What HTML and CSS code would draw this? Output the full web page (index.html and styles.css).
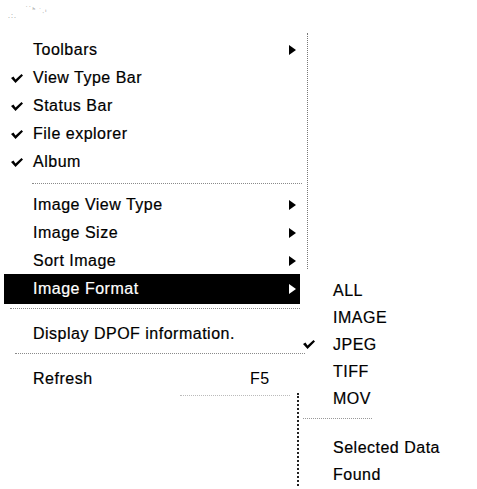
FILE: index.html
```html
<!DOCTYPE html>
<html lang="en">
<head>
    <meta charset="UTF-8" />
    <title>View Menu</title>
    <link rel="stylesheet" href="styles.css">
</head>
<body>

<div class="scan-mark">.:. <span>˙˙ʰ ˑˌᵢ</span></div>

<div class="menus">

    <ul class="menu main-menu">
        <li class="item">
            <span class="check"></span><span class="label">Toolbars</span>
            <span class="arrow"></span>
        </li>
        <li class="item checked">
            <span class="check"><svg viewBox="0 0 12 9"><polygon points="0,4 2.5,2.5 4.5,5.5 10.5,0 12,1.5 4.5,9"/></svg></span><span class="label">View Type Bar</span>
        </li>
        <li class="item checked">
            <span class="check"><svg viewBox="0 0 12 9"><polygon points="0,4 2.5,2.5 4.5,5.5 10.5,0 12,1.5 4.5,9"/></svg></span><span class="label">Status Bar</span>
        </li>
        <li class="item checked">
            <span class="check"><svg viewBox="0 0 12 9"><polygon points="0,4 2.5,2.5 4.5,5.5 10.5,0 12,1.5 4.5,9"/></svg></span><span class="label">File explorer</span>
        </li>
        <li class="item checked">
            <span class="check"><svg viewBox="0 0 12 9"><polygon points="0,4 2.5,2.5 4.5,5.5 10.5,0 12,1.5 4.5,9"/></svg></span><span class="label">Album</span>
        </li>

        <li class="sep sep-album"></li>

        <li class="item">
            <span class="check"></span><span class="label">Image View Type</span>
            <span class="arrow"></span>
        </li>
        <li class="item">
            <span class="check"></span><span class="label">Image Size</span>
            <span class="arrow"></span>
        </li>
        <li class="item">
            <span class="check"></span><span class="label">Sort Image</span>
            <span class="arrow"></span>
        </li>
        <li class="item active">
            <span class="check"></span><span class="label">Image Format</span>
            <span class="arrow"></span>
        </li>

        <li class="sep sep-format"></li>

        <li class="item">
            <span class="check"></span><span class="label">Display DPOF information.</span>
        </li>

        <li class="sep sep-dpof"></li>

        <li class="item">
            <span class="check"></span><span class="label">Refresh</span>
            <span class="shortcut">F5</span>
        </li>

        <li class="sep sep-bottom"></li>
    </ul>

    <ul class="menu sub-menu">
        <li class="item"><span class="check"></span><span class="label">ALL</span></li>
        <li class="item"><span class="check"></span><span class="label">IMAGE</span></li>
        <li class="item checked">
            <span class="check"><svg viewBox="0 0 12 9"><polygon points="0,4 2.5,2.5 4.5,5.5 10.5,0 12,1.5 4.5,9"/></svg></span><span class="label">JPEG</span>
        </li>
        <li class="item"><span class="check"></span><span class="label">TIFF</span></li>
        <li class="item"><span class="check"></span><span class="label">MOV</span></li>

        <li class="sep sep-sub"></li>

        <li class="item"><span class="check"></span><span class="label">Selected Data</span></li>
        <li class="item"><span class="check"></span><span class="label">Found</span></li>
    </ul>

</div>

</body>
</html>
```

FILE: styles.css
```css
body {
    margin: 0;
    background: #fff;
    font-family: "Liberation Sans", Arial, sans-serif;
    color: #000;
}
.scan-mark {
    height: 36px;
    padding: 6px 0 0 8px;
    box-sizing: border-box;
    font-size: 7px;
    color: #888;
    letter-spacing: 1px;
}
.scan-mark span {
    vertical-align: 6px;
    margin-left: 6px;
}
.menus {
    display: flex;
    align-items: flex-start;
}
.menu {
    list-style: none;
    margin: 0;
    padding: 0;
}
.main-menu {
    position: relative;
    width: 308px;
    flex-shrink: 0;
}
/* dotted right edge of the main menu, upper part only */
.main-menu::after {
    content: "";
    position: absolute;
    right: 0;
    top: -3px;
    height: 236px;
    border-right: 1px dotted #777;
}
.item {
    display: flex;
    align-items: center;
    height: 28px;
    font-size: 16px;
    letter-spacing: 0.5px;
    -webkit-text-stroke: 0.2px #000;
    white-space: nowrap;
}
.check {
    width: 33px;
    flex-shrink: 0;
    display: flex;
    justify-content: flex-start;
    padding-left: 11px;
    box-sizing: border-box;
}
.check svg {
    width: 12px;
    height: 9px;
    fill: #000;
}
.label {
    flex: 1;
}
.arrow {
    width: 0;
    height: 0;
    margin-right: 12px;
    border-top: 5px solid transparent;
    border-bottom: 5px solid transparent;
    border-left: 7px solid #000;
}
.shortcut {
    width: 58px;
    -webkit-text-stroke: 0;
}
.item.active {
    height: 30px;
    margin: -1px 8px -1px 4px;
    background: #000;
    color: #fff;
    -webkit-text-stroke: 0.2px #fff;
}
.item.active .check {
    width: 29px;
}
.item.active .arrow {
    margin-right: 4px;
    border-left-color: #fff;
}
.sep {
    border-top: 1px dotted #8a8a8a;
}
.sep-album {
    height: 7px;
    margin: 7px 6px 0 32px;
}
.sep-format {
    height: 11px;
    margin: 5px 8px 0 10px;
}
.sep-dpof {
    height: 11px;
    margin: 5px 3px 0 15px;
}
.sep-bottom {
    margin: 2px 18px 0 180px;
    border-top-color: #bbb;
}
.sub-menu {
    position: relative;
    margin: 241px 0 0 -11px;
    width: 150px;
}
/* left edge of the submenu, visible below the main menu */
.sub-menu::before {
    content: "";
    position: absolute;
    left: 0;
    top: 116px;
    height: 100px;
    border-left: 2px dotted #222;
}
.sub-menu .item {
    height: 27px;
}
.sub-menu .check {
    width: 36px;
    padding-left: 6px;
}
.sep-sub {
    height: 15px;
    margin: 6px 75px 0 6px;
    border-top-color: #999;
}
```
